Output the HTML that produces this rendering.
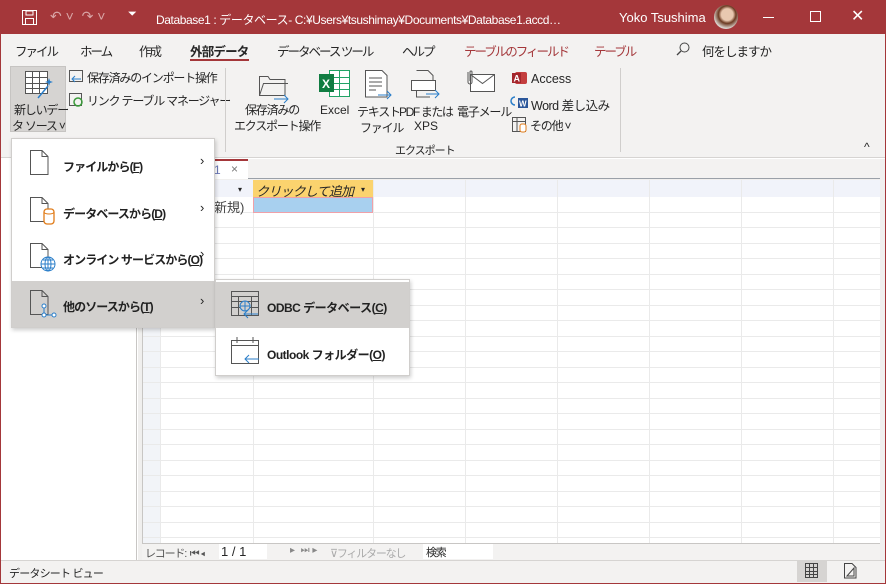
<!DOCTYPE html>
<html><head><meta charset="utf-8"><style>
*{margin:0;padding:0;box-sizing:border-box}
body{width:886px;height:584px;overflow:hidden;background:#fff;font-family:"Liberation Sans","Noto Sans CJK JP",sans-serif;font-size:12px;color:#262626;position:relative;letter-spacing:-1.2px}
.a{position:absolute;white-space:nowrap}
.l{letter-spacing:0}
.t{font-size:12.5px;letter-spacing:-2px}
svg{position:absolute;overflow:visible}
.b{font-weight:bold;font-size:12px;color:#222;letter-spacing:-0.9px}
</style></head><body>
<div class="a" style="left:0;top:0;width:886px;height:34px;background:#a4373a"></div>
<div class="a" style="left:0;top:0;width:886px;height:584px;border:1px solid #a4373a;border-top:none"></div>
<svg style="left:22px;top:10px" width="16" height="16"><rect x="0.5" y="0.5" width="14" height="14" fill="none" stroke="#fff"/><rect x="4" y="1" width="7" height="4" fill="none" stroke="#fff"/><rect x="3.5" y="8.5" width="8" height="6" fill="none" stroke="#fff"/></svg>
<div class="a l" style="left:50px;top:8px;color:#d9a5a6;font-size:14px">↶ ˅ &nbsp;↷ ˅</div>
<div class="a" style="left:128px;top:8px;color:#fff;font-size:11px">⏷</div>
<div class="a" style="left:156px;top:11px;color:#fff;font-size:12px;letter-spacing:-0.4px">Database1 : データベース- C:¥Users¥tsushimay¥Documents¥Database1.accd…</div>
<div class="a l" style="left:619px;top:10px;color:#fff;font-size:13px">Yoko Tsushima</div>
<div class="a" style="left:714px;top:5px;width:24px;height:24px;border-radius:50%;background:radial-gradient(circle at 55% 40%,#e8c8b0 0 30%,#6b3a22 45%,#d9d2cc 70%)"></div>
<div class="a" style="left:763px;top:17px;width:11px;height:1px;background:#fff"></div>
<div class="a" style="left:810px;top:11px;width:11px;height:11px;border:1px solid #fff"></div>
<div class="a l" style="left:851px;top:6px;color:#fff;font-size:16px">✕</div>
<div class="a" style="left:1px;top:34px;width:884px;height:124px;background:#f3f2f1;border-bottom:1px solid #d6d4d2"></div>
<div class="a t" style="left:15px;top:41px">ファイル</div>
<div class="a t" style="left:80px;top:41px">ホーム</div>
<div class="a t" style="left:139px;top:41px">作成</div>
<div class="a t" style="left:190px;top:41px;font-weight:bold;letter-spacing:-0.8px">外部データ</div>
<div class="a" style="left:190px;top:59px;width:59px;height:2px;background:#a4373a"></div>
<div class="a t" style="left:277px;top:41px">データベース ツール</div>
<div class="a t" style="left:402px;top:41px">ヘルプ</div>
<div class="a t" style="left:464px;top:41px;color:#a4373a">テーブルのフィールド</div>
<div class="a t" style="left:594px;top:41px;color:#a4373a">テーブル</div>
<svg style="left:676px;top:42px" width="14" height="14"><circle cx="8.5" cy="5.5" r="4.5" fill="none" stroke="#444"/><path d="M5 9L1 13" stroke="#444" stroke-width="1.3"/></svg>
<div class="a t" style="left:702px;top:41px;letter-spacing:-1px">何をしますか</div>
<div class="a" style="left:10px;top:66px;width:56px;height:66px;background:#d6d4d2;border:1px solid #c6c4c2"></div>
<svg style="left:24px;top:70px" width="30" height="30"><rect x="1.5" y="1.5" width="22" height="22" fill="#fff" stroke="#555"/><path d="M1.5 7.5H23.5M1.5 13.5H23.5M1.5 18.5H23.5M8.5 1.5V23.5M15.5 1.5V23.5" stroke="#555"/><path d="M14 28L24 16" stroke="#2a7ec9" stroke-width="1.5"/><path d="M25 8l1 3 3 1-3 1-1 3-1-3-3-1 3-1z" fill="#2a7ec9"/></svg>
<div class="a" style="left:14px;top:101px">新しいデー</div>
<div class="a" style="left:12px;top:117px">タ ソース ˅</div>
<svg style="left:69px;top:70px" width="16" height="14"><rect x="0.5" y="0.5" width="13" height="11" fill="none" stroke="#555"/><path d="M12 9H4M6 6L3 9 6 12" stroke="#2a7ec9" fill="none"/></svg>
<div class="a" style="left:87px;top:69px">保存済みのインポート操作</div>
<svg style="left:69px;top:93px" width="16" height="14"><rect x="0.5" y="0.5" width="12" height="12" fill="none" stroke="#555"/><circle cx="9" cy="9" r="4" fill="none" stroke="#3a9a3a" stroke-width="1.5"/></svg>
<div class="a" style="left:87px;top:92px">リンク テーブル マネージャー</div>
<div class="a" style="left:225px;top:68px;width:1px;height:84px;background:#d0cecc"></div>
<svg style="left:258px;top:72px" width="34" height="28"><path d="M1.5 4.5H10l2 3H27v16H1.5z" fill="none" stroke="#555"/><path d="M1.5 23.5l4-12H30" fill="none" stroke="#555"/><path d="M16 27H30M26 23l4 4-4 4" stroke="#2a7ec9" fill="none"/></svg>
<div class="a" style="left:245px;top:101px">保存済みの</div>
<div class="a" style="left:234px;top:117px">エクスポート操作</div>
<svg style="left:319px;top:70px" width="32" height="28"><rect x="10.5" y="0.5" width="20" height="26" fill="#fff" stroke="#21a366"/><path d="M10.5 7.5H30.5M10.5 13.5H30.5M10.5 19.5H30.5M20.5 0.5V26.5" stroke="#21a366"/><rect x="0" y="4" width="15" height="18" fill="#107c41"/><text x="3" y="18" fill="#fff" font-weight="bold" font-size="12" font-family="Liberation Sans">X</text></svg>
<div class="a l" style="left:320px;top:103px">Excel</div>
<svg style="left:364px;top:70px" width="30" height="30"><path d="M1.5 0.5H18l5 5V27H1.5z" fill="#fff" stroke="#555"/><path d="M5 8H18M5 12H18M5 16H18M5 20H12" stroke="#555"/><path d="M14 25H27M23 21l4 4-4 4" stroke="#2a7ec9" fill="none"/></svg>
<div class="a" style="left:357px;top:103px">テキスト</div>
<div class="a" style="left:360px;top:119px">ファイル</div>
<svg style="left:410px;top:70px" width="34" height="30"><path d="M6.5 0.5H18l5 5V10" fill="none" stroke="#555"/><rect x="1.5" y="10.5" width="24" height="10" fill="#fff" stroke="#555"/><path d="M6.5 20.5V27H20" fill="none" stroke="#555"/><path d="M16 24H29M25 20l4 4-4 4" stroke="#2a7ec9" fill="none"/></svg>
<div class="a" style="left:399px;top:103px;letter-spacing:-1.4px">PDF または</div>
<div class="a l" style="left:414px;top:119px">XPS</div>
<svg style="left:465px;top:70px" width="34" height="24"><rect x="5.5" y="4.5" width="24" height="17" fill="#fff" stroke="#555"/><path d="M5.5 4.5l12 9 12-9" fill="none" stroke="#555"/><path d="M3 2v10a2 2 0 004 0V2a1 1 0 00-2 0v9" fill="none" stroke="#555"/></svg>
<div class="a" style="left:457px;top:103px">電子メール</div>
<svg style="left:512px;top:71px" width="16" height="14"><rect x="3" y="1" width="12" height="12" rx="2" fill="#c43e3e"/><rect x="0" y="2" width="9" height="10" fill="#a4262c"/><text x="1.5" y="10.5" fill="#fff" font-size="9" font-weight="bold" font-family="Liberation Sans">A</text></svg>
<div class="a l" style="left:531px;top:72px;font-size:12.5px">Access</div>
<svg style="left:512px;top:94px" width="16" height="16"><rect x="6" y="4" width="10" height="10" fill="#2b579a"/><text x="7" y="12.5" fill="#fff" font-size="8" font-weight="bold" font-family="Liberation Sans">W</text><path d="M3 3a4 4 0 000 8" stroke="#2a7ec9" fill="none" stroke-width="1.5"/></svg>
<div class="a" style="left:531px;top:95px;font-size:12.5px;letter-spacing:-0.5px">Word 差し込み</div>
<svg style="left:512px;top:117px" width="16" height="16"><rect x="0.5" y="0.5" width="13" height="14" fill="none" stroke="#555"/><path d="M0.5 4.5H13M5 0.5V15" stroke="#555"/><rect x="8" y="7" width="6" height="8" rx="2" fill="#fff" stroke="#e07b18"/></svg>
<div class="a" style="left:530px;top:117px">その他 ˅</div>
<div class="a" style="left:395px;top:142px;font-size:11px;letter-spacing:-1px">エクスポート</div>
<div class="a" style="left:620px;top:68px;width:1px;height:84px;background:#d0cecc"></div>
<div class="a" style="left:864px;top:140px">^</div>
<div class="a" style="left:1px;top:159px;width:136px;height:401px;background:#fff;border-right:1px solid #c8c6c4"></div>
<div class="a" style="left:138px;top:159px;width:747px;height:401px;background:#f0efee"></div>
<div class="a" style="left:142px;top:159px;width:738px;height:20px;background:#f3f2f1;border-bottom:1px solid #9aa0a8"></div>
<div class="a" style="left:210px;top:159px;width:38px;height:20px;background:#fff;border-top:2px solid #a4373a"></div>
<div class="a" style="left:214px;top:163px;color:#6b79b8">1</div>
<div class="a" style="left:231px;top:162px;color:#777">×</div>
<div class="a" style="left:142px;top:180px;width:738px;height:363px;background:#fff;border-left:1px solid #c8c6c4"></div>
<div class="a" style="left:143px;top:180px;width:17px;height:363px;background:#f2f4f8"></div>
<div class="a" style="left:160px;top:180px;width:720px;height:17px;background:#f1f3fa"></div>
<svg style="left:143px;top:180px" width="738" height="363">
<g stroke="#eaeaea"><path d="M0 32.5H737M0 47.5H737M0 63.5H737M0 78.5H737M0 94.5H737M0 109.5H737M0 125.5H737M0 140.5H737M0 156.5H737M0 171.5H737M0 187.5H737M0 202.5H737M0 218.5H737M0 233.5H737M0 249.5H737M0 264.5H737M0 280.5H737M0 295.5H737M0 311.5H737M0 326.5H737M0 342.5H737M0 357.5H737"/>
<path d="M17.5 0V363M110.5 0V363M230.5 0V363M322.5 0V363M414.5 0V363M506.5 0V363M598.5 0V363M690.5 0V363"/></g></svg>
<div class="a" style="left:238px;top:185px;font-size:8px">▾</div>
<div class="a" style="left:253px;top:180px;width:120px;height:17px;background:#fbd36e"></div>
<div class="a" style="left:256px;top:181px;font-style:italic;font-size:13px;letter-spacing:-0.8px">クリックして追加</div>
<div class="a" style="left:361px;top:185px;font-size:8px">▾</div>
<div class="a" style="left:253px;top:197px;width:120px;height:16px;background:#a8d0ef;border:1px solid #f0a0a8"></div>
<div class="a" style="left:214px;top:197px;font-size:13px;color:#444;letter-spacing:0">新規)</div>
<div class="a" style="left:142px;top:543px;width:738px;height:17px;background:#f3f2f1;border-top:1px solid #c8c6c4"></div>
<div class="a" style="left:145px;top:545px;font-size:11px;color:#555">レコード: &nbsp;⏮ ◂</div>
<div class="a l" style="left:219px;top:544px;width:48px;height:15px;background:#fff;font-size:13px;padding-left:2px">1 / 1</div>
<div class="a l" style="left:290px;top:545px;font-size:10px;color:#888">▸ &nbsp;⏭ ▸</div>
<div class="a" style="left:330px;top:545px;font-size:11px;color:#aaa">⊽フィルターなし</div>
<div class="a" style="left:423px;top:544px;width:70px;height:15px;background:#fff;font-size:11px;padding-left:3px">検索</div>
<div class="a" style="left:1px;top:560px;width:884px;height:23px;background:#f3f2f1;border-top:1px solid #d6d4d2"></div>
<div class="a" style="left:9px;top:565px;font-size:11px;letter-spacing:-0.8px">データシート ビュー</div>
<div class="a" style="left:797px;top:561px;width:30px;height:21px;background:#d6d4d2"></div>
<svg style="left:805px;top:563px" width="14" height="16"><rect x="0.5" y="0.5" width="12" height="14" fill="none" stroke="#444"/><path d="M0.5 4.5H12.5M0.5 8.5H12.5M0.5 11.5H12.5M4.5 0.5V15M8.5 0.5V15" stroke="#444"/></svg>
<svg style="left:844px;top:563px" width="14" height="16"><path d="M0.5 0.5H8l4 4V15H0.5z" fill="none" stroke="#444"/><path d="M3 13L10 5V13z" fill="none" stroke="#444"/></svg>
<div class="a" style="left:11px;top:138px;width:204px;height:190px;background:#fff;border:1px solid #d0cecc;box-shadow:1px 2px 4px rgba(0,0,0,.2)"></div>
<div class="a" style="left:12px;top:281px;width:202px;height:46px;background:#d2d0ce"></div>
<svg style="left:30px;top:150px" width="20" height="26"><path d="M0.5 0.5H12l6 6V24.5H0.5z" fill="#fff" stroke="#555"/><path d="M12 0.5V6.5H18" fill="none" stroke="#555"/></svg>
<div class="a b" style="left:63px;top:158px">ファイルから(<u>F</u>)</div>
<div class="a" style="left:200px;top:153px;font-size:13px">›</div>
<svg style="left:30px;top:197px" width="28" height="30"><path d="M0.5 0.5H12l6 6V24.5H0.5z" fill="#fff" stroke="#555"/><path d="M12 0.5V6.5H18" fill="none" stroke="#555"/><rect x="14" y="12" width="10" height="15" rx="3" fill="#fff" stroke="#e07b18" stroke-width="1.3"/><path d="M14 15a5 2 0 0010 0" stroke="#e07b18" fill="none"/></svg>
<div class="a b" style="left:63px;top:205px">データベースから(<u>D</u>)</div>
<div class="a" style="left:200px;top:200px;font-size:13px">›</div>
<svg style="left:30px;top:243px" width="28" height="30"><path d="M0.5 0.5H12l6 6V24.5H0.5z" fill="#fff" stroke="#555"/><path d="M12 0.5V6.5H18" fill="none" stroke="#555"/><circle cx="18" cy="21" r="7" fill="#fff" stroke="#2a7ec9"/><path d="M11 21H25M18 14V28M13 17H23M13 25H23" stroke="#2a7ec9"/><ellipse cx="18" cy="21" rx="3" ry="7" fill="none" stroke="#2a7ec9"/></svg>
<div class="a b" style="left:63px;top:251px">オンライン サービスから(<u>O</u>)</div>
<div class="a" style="left:200px;top:246px;font-size:13px">›</div>
<svg style="left:30px;top:290px" width="28" height="30"><path d="M0.5 0.5H12l6 6V24.5H0.5z" fill="#d2d0ce" stroke="#555"/><path d="M12 0.5V6.5H18" fill="none" stroke="#555"/><circle cx="14" cy="16" r="2" fill="#fff" stroke="#2a7ec9"/><circle cx="14" cy="25" r="2" fill="#fff" stroke="#2a7ec9"/><circle cx="24" cy="25" r="2" fill="#fff" stroke="#2a7ec9"/><path d="M14 18V23M16 25H22" stroke="#2a7ec9"/></svg>
<div class="a b" style="left:63px;top:298px">他のソースから(<u>T</u>)</div>
<div class="a" style="left:200px;top:293px;font-size:13px">›</div>
<div class="a" style="left:215px;top:279px;width:195px;height:97px;background:#fff;border:1px solid #d0cecc;box-shadow:1px 2px 4px rgba(0,0,0,.2)"></div>
<div class="a" style="left:216px;top:282px;width:193px;height:46px;background:#d2d0ce"></div>
<svg style="left:231px;top:291px" width="30" height="28"><rect x="0.5" y="0.5" width="27" height="24" fill="none" stroke="#555"/><path d="M0.5 5.5H27.5M0.5 10.5H27.5M0.5 16.5H27.5M7.5 5.5V25M20.5 5.5V25" stroke="#555"/><circle cx="14" cy="15" r="5" fill="#d2d0ce" stroke="#2a7ec9"/><path d="M9 15H19M14 10V20" stroke="#2a7ec9"/><path d="M13 23H27M17 19l-4 4 4 4" stroke="#2a7ec9" fill="none"/></svg>
<div class="a b" style="left:267px;top:299px;letter-spacing:-0.5px">ODBC データベース(<u>C</u>)</div>
<svg style="left:231px;top:337px" width="30" height="30"><rect x="0.5" y="3.5" width="27" height="23" fill="none" stroke="#555"/><path d="M0.5 8.5H27.5M6 0V6M22 0V6" stroke="#555"/><path d="M14 22H28M18 18l-4 4 4 4" stroke="#2a7ec9" fill="none"/></svg>
<div class="a b" style="left:267px;top:346px;letter-spacing:-0.5px">Outlook フォルダー(<u>O</u>)</div>
</body></html>
